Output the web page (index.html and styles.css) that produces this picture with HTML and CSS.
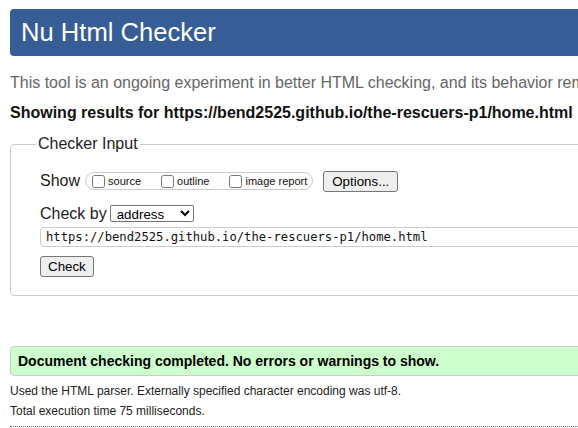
FILE: index.html
```html
<!DOCTYPE html>
<html lang="en">
<head>
<meta charset="utf-8">
<title>Nu Html Checker</title>
<link rel="stylesheet" href="styles.css">
</head>
<body>
<div class="page">
  <h1 class="title">Nu Html Checker</h1>
  <p class="intro">This tool is an ongoing experiment in better HTML checking, and its behavior remains subject to change</p>
  <p class="showing">Showing results for https://bend2525.github.io/the-rescuers-p1/home.html</p>
  <form class="checker">
    <fieldset class="fs">
      <legend class="legend">Checker Input</legend>
      <div class="show-row">
        <span class="row-label">Show</span>
        <span class="opts">
          <label class="opt"><input type="checkbox" class="cb"><span>source</span></label>
          <label class="opt"><input type="checkbox" class="cb"><span>outline</span></label>
          <label class="opt"><input type="checkbox" class="cb"><span>image report</span></label>
        </span>
        <button type="button" class="btn btn-options">Options...</button>
      </div>
      <div class="by-row">
        <span class="row-label">Check by</span>
        <select class="sel"><option>address</option></select>
      </div>
      <input class="url" type="url" value="https://bend2525.github.io/the-rescuers-p1/home.html">
      <div class="submit-row"><button type="button" class="btn">Check</button></div>
    </fieldset>
  </form>
  <p class="success">Document checking completed. No errors or warnings to show.</p>
  <p class="meta meta-first">Used the HTML parser. Externally specified character encoding was utf-8.</p>
  <p class="meta meta-second">Total execution time 75 milliseconds.</p>
  <div class="rule"></div>
</div>
</body>
</html>
```
FILE: styles.css
```css
html, body {
  margin: 0;
  padding: 0;
  overflow: hidden;
  background: #fff;
}
body {
  font-family: "Liberation Sans", Arial, sans-serif;
  color: #222;
  padding: 9px 0 0 10px;
}
.page {
  width: 900px;
}
.title {
  margin: 0;
  height: 47px;
  line-height: 47px;
  padding-left: 11px;
  background: #365d95;
  color: #fff;
  font-size: 25.6px;
  font-weight: normal;
  border-radius: 4px;
}
.intro {
  margin: 17px 0 0;
  font-size: 16px;
  line-height: 20px;
  color: #666;
  white-space: nowrap;
}
.showing {
  margin: 10px 0 0;
  font-size: 16px;
  line-height: 20px;
  font-weight: bold;
  color: #111;
  white-space: nowrap;
}
.checker {
  margin: 11px 0 0;
}
.fs {
  margin: 0;
  padding: 16px 0 18px 29px;
  border: 1px solid #ccc;
  border-radius: 4px;
  min-inline-size: 0;
}
.legend {
  padding: 0 2px;
  margin-left: -4px;
  font-size: 16px;
  line-height: 20px;
  color: #222;
}
.show-row {
  display: flex;
  align-items: center;
  height: 22px;
}
.row-label {
  font-size: 16px;
  line-height: 20px;
  color: #222;
}
.show-row .row-label {
  margin-right: 5px;
}
.opts {
  display: flex;
  align-items: center;
  box-sizing: border-box;
  height: 18px;
  border: 1px solid #ccc;
  border-radius: 9px;
  padding: 0 5px 0 2px;
}
.opt {
  display: flex;
  align-items: center;
  font-size: 11px;
  color: #111;
  margin-right: 16px;
}
.opt:last-child {
  margin-right: 0;
}
.cb {
  margin: 0 3px 0 4px;
  width: 13px;
  height: 13px;
}
.btn {
  box-sizing: border-box;
  height: 21px;
  padding: 0 7px;
  border: 1px solid #767676;
  border-radius: 3px;
  background: #efefef;
  color: #000;
  font-family: "Liberation Sans", Arial, sans-serif;
  font-size: 13.33px;
  line-height: 19px;
}
.btn-options {
  margin-left: 10px;
  padding: 0 8px;
}
.by-row {
  display: flex;
  align-items: baseline;
  margin-top: 12px;
}
.by-row .row-label {
  margin-right: 3px;
}
.sel {
  box-sizing: border-box;
  width: 84px;
  height: 17px;
  padding: 0 0 0 2px;
  border: 1px solid #767676;
  border-radius: 2px;
  background: #fff;
  color: #000;
  font-family: "Liberation Sans", Arial, sans-serif;
  font-size: 13.33px;
}
.url {
  display: block;
  box-sizing: border-box;
  width: 800px;
  height: 20px;
  margin-top: 3px;
  padding: 0 5px;
  border: 1px solid #ccc;
  border-radius: 4px;
  font-family: "DejaVu Sans Mono", "Liberation Mono", monospace;
  font-size: 12.2px;
  color: #111;
  background: #fff;
}
.submit-row {
  margin-top: 9px;
  display: flex;
}
.success {
  box-sizing: border-box;
  margin: 50px 0 0;
  height: 30px;
  line-height: 28px;
  padding: 0 7px;
  border: 1px solid #ccc;
  border-radius: 4px;
  background: #ccffcc;
  font-size: 14px;
  font-weight: bold;
  color: #000;
  white-space: nowrap;
}
.meta {
  font-size: 12px;
  line-height: 16px;
  color: #222;
  white-space: nowrap;
}
.meta-first {
  margin: 7px 0 0;
}
.meta-second {
  margin: 4px 0 0;
}
.rule {
  margin-top: 7px;
  border-top: 1px dotted #666;
}
```
